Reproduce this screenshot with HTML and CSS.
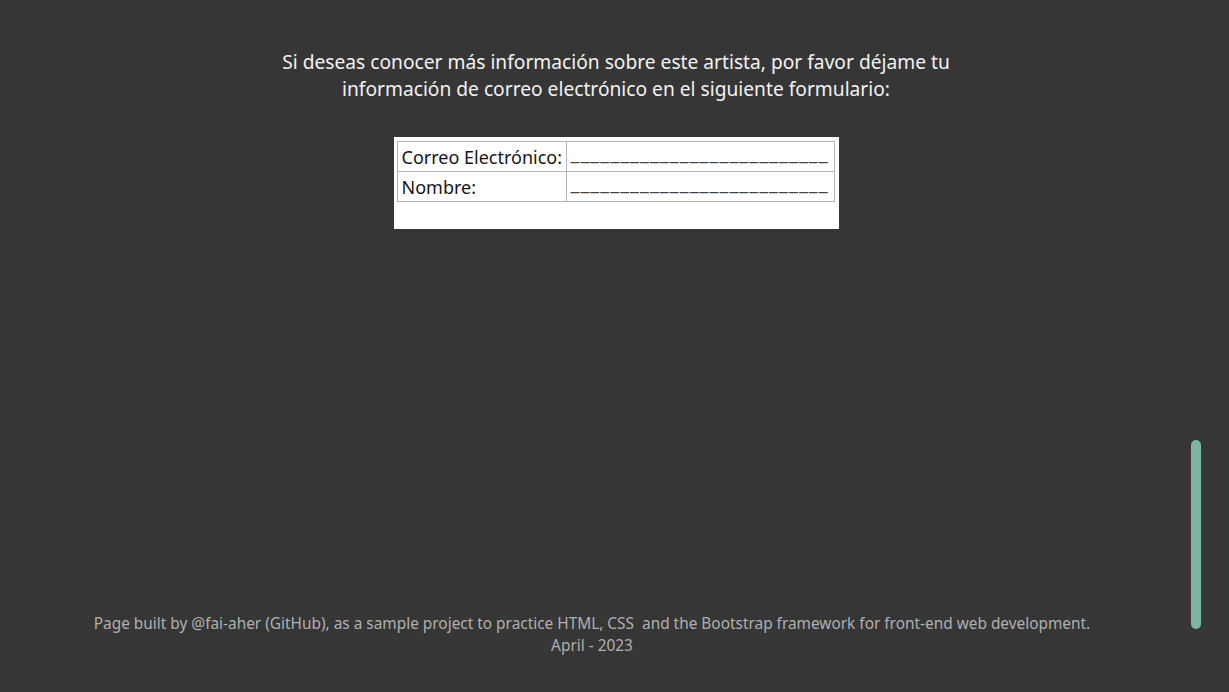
FILE: index.html
```html
<!DOCTYPE html>
<html lang="es">
<head>
<meta charset="utf-8">
<title>Contacto</title>
<link rel="stylesheet" href="styles.css">
</head>
<body>
<main class="page">
  <section class="intro">
    <p class="lead">Si deseas conocer más información sobre este artista, por favor déjame tu<br>información de correo electrónico en el siguiente formulario:</p>
    <div class="form-box">
      <table class="form-table">
        <tr>
          <td class="label">Correo Electrónico:</td>
          <td class="field">__________________________</td>
        </tr>
        <tr>
          <td class="label">Nombre:</td>
          <td class="field">__________________________</td>
        </tr>
      </table>
    </div>
  </section>
  <footer class="footer">
    <p>Page built by @fai-aher (GitHub), as a sample project to practice HTML, CSS&nbsp; and the Bootstrap framework for front-end web development.<br>April - 2023</p>
  </footer>
</main>
<div class="scroll-thumb"></div>
</body>
</html>
```
FILE: styles.css
```css
html, body {
  margin: 0;
  padding: 0;
  height: 100%;
}
body {
  background: #363636;
  font-family: "Noto Sans", "Open Sans", sans-serif;
  overflow: hidden;
}
.page {
  height: 692px;
  display: flex;
  flex-direction: column;
}
.intro {
  flex: 1;
  display: flex;
  flex-direction: column;
  align-items: center;
  padding-top: 48px;
}
.lead {
  margin: 0;
  margin-left: 3px;
  color: #f2f2f2;
  font-size: 19.2px;
  line-height: 27px;
  text-align: center;
}
.form-box {
  margin-top: 35px;
  margin-left: 3px;
  width: 438px;
  height: 85px;
  background: #fff;
  padding: 4px 4px 3px 3px;
  box-sizing: content-box;
}
.form-table {
  border-collapse: collapse;
  border: 1px solid #b4b4b4;
  width: 100%;
  font-size: 18px;
  color: #151515;
  table-layout: fixed;
}
.form-table td {
  border: 1px solid #b4b4b4;
  height: 29px;
  padding: 0 4px;
  line-height: 26px;
  white-space: nowrap;
}
.form-table .label {
  width: 160px;
}
.form-table .field {
  color: #444;
  font-size: 20px;
  letter-spacing: 1.05px;
  line-height: 22px;
  vertical-align: top;
}
.footer {
  padding: 0 45px 35px 0;
}
.footer p {
  margin: 0;
  color: #b0b0b0;
  font-size: 15.4px;
  line-height: 22px;
  text-align: center;
}
.scroll-thumb {
  position: absolute;
  left: 1191px;
  top: 440px;
  width: 10px;
  height: 189px;
  border-radius: 5px;
  background: #7fb5a4;
}
```
